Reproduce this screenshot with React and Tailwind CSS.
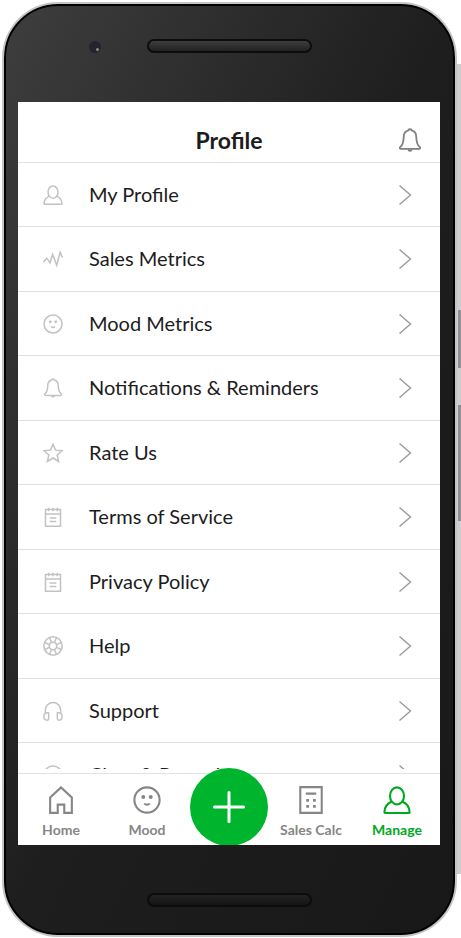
import React from 'react';

const icons = {
  user: (
    <>
      <ellipse cx="12" cy="8.5" rx="6" ry="7.3" />
      <path d="M7.500 13.300C4 14.800 1.300 17.600 1.200 22.400c0 .5.200.700.700.700h20.200c.5 0 .7-.2.7-.7-.1-4.800-2.800-7.600-6.300-9.100" />
    </>
  ),
  metrics: <path d="M.5 16l4-5 4 5.500 3-10 5 13 4-15.500 3 6.500" />,
  mood: (
    <>
      <circle cx="12" cy="12" r="10.8" />
      <circle cx="8.8" cy="9.4" r=".8" fill="currentColor" />
      <circle cx="15.2" cy="9.4" r=".8" fill="currentColor" />
      <path d="M9.700 15c1 1.400 3.600 1.400 4.600 0" />
    </>
  ),
  bell: (
    <>
      <path d="M10.400 2.400c0-1.600 3.200-1.600 3.200 0 3.200.9 4.700 3.300 4.700 6.500 0 5.600 1.300 8.200 3.400 10 .9.900.5 2-.7 2H3c-1.200 0-1.600-1.100-.7-2 2.100-1.800 3.400-4.400 3.400-10 0-3.200 1.500-5.600 4.700-6.500z" />
      <path d="M10.300 21.300c.3 1.900 3.100 1.900 3.400 0" />
    </>
  ),
  star: <path d="m12 1.500 3.100 7.100 7.700.7-5.800 5.100 1.700 7.800L12 18l-6.700 4.200L7 14.400 1.200 9.300l7.700-.7z" />,
  notes: <path d="M3 3h18v20H3zM3 8.300h18M8 13.300h8M8 17.300h8M6.800 1v4M12 1v4M17.200 1v4" />,
  help: (
    <>
      <circle cx="12" cy="12" r="11" />
      <circle cx="12" cy="12" r="4.500" />
      <path d="M16.200 13.700l6 2.500M13.700 16.200l2.500 6M10.300 16.200l-2.500 6M7.800 13.700l-6 2.500M7.800 10.300l-6-2.500M10.300 7.800l-2.500-6M13.700 7.800l2.500-6M16.200 10.300l6-2.500" />
    </>
  ),
  support: (
    <>
      <path d="M2.800 14.500v-3.500a9.200 9.200 0 0 1 18.400 0v3.500" />
      <path d="M6.800 14.300c-3.500-.5-5.800.7-5.800 4s1.500 4.700 3.800 4.700c1.500 0 2-.7 2-2zM17.200 14.300c3.500-.5 5.800.7 5.800 4s-1.500 4.700-3.800 4.700c-1.500 0-2-.7-2-2z" />
    </>
  ),
  home: <path d="M2.700 9.800 12 1.200l9.300 8.600V23h-6.500v-7h-5.600v7H2.700z" />,
  calc: (
    <>
      <path d="M2.800 1h18.400v22H2.800zM7.500 6.500h9" />
      <path d="M7.900 12.300h2.400M13.700 12.300h2.400M7.900 17.400h2.400M13.700 17.400h2.400" strokeWidth="2.400" />
    </>
  ),
};

function Icon({ name, className }) {
  return (
    <svg viewBox="0 0 24 24" fill="none" stroke="currentColor" strokeWidth="1.8" className={className} aria-hidden="true">
      {icons[name]}
    </svg>
  );
}

const MENU = [
  { label: 'My Profile', icon: 'user' },
  { label: 'Sales Metrics', icon: 'metrics' },
  { label: 'Mood Metrics', icon: 'mood' },
  { label: 'Notifications & Reminders', icon: 'bell' },
  { label: 'Rate Us', icon: 'star' },
  { label: 'Terms of Service', icon: 'notes' },
  { label: 'Privacy Policy', icon: 'notes' },
  { label: 'Help', icon: 'help' },
  { label: 'Support', icon: 'support' },
  { label: 'Clear & Record', icon: 'mood' },
];

function Slot({ className }) {
  return <div className={`h-3.5 w-[165px] rounded-full border-2 border-[#0c0c0c] bg-linear-to-b ${className}`} />;
}

function Tab({ label, icon, active }) {
  return (
    <a
      href="#"
      className={`flex flex-1 flex-col items-center pt-3 text-sm font-bold ${active ? 'text-[#00a81f]' : 'text-[#868686]'}`}
    >
      <Icon name={icon} className="size-7" />
      <span className="mt-1.5 leading-5 whitespace-nowrap">{label}</span>
    </a>
  );
}

export default function App() {
  return (
    <div className="relative bg-white pt-1 pr-1.5 pb-[3px] pl-1 font-['Lato',sans-serif]">
      {/* side rail with power and volume keys */}
      <div className="absolute top-16 right-0 bottom-16 w-1 bg-[#cfcdcf]" />
      <div className="absolute top-[310px] right-0 h-[58px] w-[3px] bg-[#918f94]" />
      <div className="absolute top-[405px] right-0 h-[116px] w-[3px] bg-[#918f94]" />

      <div className="relative rounded-[54px] border-2 border-black bg-linear-to-br from-[#3e3e3e] via-[#1e1e1e] to-[#181818] pr-[13px] pl-3 shadow-[0_0_0_2px_#c4c4c4]">
        {/* top bezel */}
        <div className="relative flex h-[96px] items-start justify-center pt-[33px]">
          <span className="absolute top-[35px] left-[71px] flex size-3 items-end justify-end rounded-full bg-[#25232f] p-0.5">
            <span className="size-[3px] rounded-full bg-[#8d8b96]" />
          </span>
          <Slot className="from-[#3e3e3e] to-[#222222]" />
        </div>

        <main className="overflow-hidden bg-white">
          <header className="grid h-[61px] grid-cols-[1fr_auto_1fr] items-end border-b border-[#e2e2e2] px-[18px] pb-2">
            <h1 className="col-start-2 text-[23px] leading-7 font-bold text-[#1c1c1c]">Profile</h1>
            <button type="button" aria-label="Notifications" className="mb-0.5 justify-self-end text-[#808080]">
              <Icon name="bell" className="size-6" />
            </button>
          </header>

          <ul className="h-[606px] overflow-hidden">
            {MENU.map(item => (
              <li key={item.label} className="h-16 border-b border-[#e0e0e0] even:h-[65px]">
                <a href="#" className="flex h-full items-center pr-7 pl-[25px]">
                  <Icon name={item.icon} className="size-5 text-[#c2c2c2]" />
                  <span className="ml-[26px] flex-1 pb-0.5 text-xl text-[#1c1c1c]">{item.label}</span>
                  <svg viewBox="0 0 14 22" fill="none" stroke="#9a9a9a" strokeWidth="1.4" className="h-[22px] w-3.5">
                    <path d="m1.500 1.500 11 9.500-11 9.500" />
                  </svg>
                </a>
              </li>
            ))}
          </ul>

          <nav className="relative mt-1 flex h-[72px] border-t border-[#e2e2e2]">
            <Tab label="Home" icon="home" />
            <Tab label="Mood" icon="mood" />
            <button
              type="button"
              aria-label="Add"
              className="-mt-1.5 flex size-[78px] items-center justify-center rounded-full bg-[#00b52e] text-white"
            >
              <svg viewBox="0 0 32 32" stroke="currentColor" strokeWidth="3" strokeLinecap="round" className="size-8">
                <path d="M16 1.500v29M1.500 16h29" />
              </svg>
            </button>
            <Tab label="Sales Calc" icon="calc" />
            <Tab label="Manage" icon="user" active />
          </nav>
        </main>

        {/* bottom bezel */}
        <div className="flex h-[88px] items-start justify-center pt-[48px]">
          <Slot className="from-[#222222] to-[#141414]" />
        </div>
      </div>
    </div>
  );
}
